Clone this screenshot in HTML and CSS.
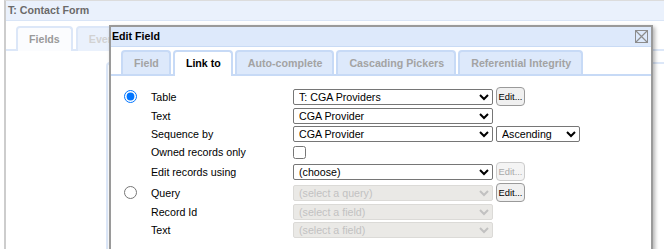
FILE: index.html
```html
<!DOCTYPE html>
<html lang="en">
<head>
    <meta charset="UTF-8">
    <title>Edit Field</title>
    <link rel="stylesheet" href="styles.css">
</head>
<body>
    <!-- window behind the dialog -->
    <div class="window">
        <div class="window-title">T: Contact Form</div>
        <div class="window-tabs">
            <span class="wtab wtab-active">Fields</span>
            <span class="wtab">Events</span>
        </div>
        <div class="window-body">
            <div class="inner-panel"></div>
        </div>
    </div>

    <div class="dialog">
        <div class="dialog-title">
            <span>Edit Field</span>
            <svg class="close" width="13" height="13" viewBox="0 0 13 13">
                <rect x="0.5" y="0.5" width="12" height="12" fill="none" stroke="#8c8c8c"/>
                <path d="M1 1 L12 12 M12 1 L1 12" stroke="#8c8c8c" stroke-width="1.2"/>
            </svg>
        </div>
        <div class="dialog-tabs">
            <span class="tab">Field</span>
            <span class="tab tab-active">Link to</span>
            <span class="tab">Auto-complete</span>
            <span class="tab">Cascading Pickers</span>
            <span class="tab">Referential Integrity</span>
        </div>
        <div class="dialog-body">
            <table class="link-form">
                <tr class="row-btn">
                    <td class="c-radio"><input type="radio" name="source" checked></td>
                    <td class="c-label">Table</td>
                    <td class="c-input"><select><option>T: CGA Providers</option></select></td>
                    <td class="c-extra"><button>Edit...</button></td>
                </tr>
                <tr>
                    <td></td>
                    <td class="c-label">Text</td>
                    <td class="c-input"><select><option>CGA Provider</option></select></td>
                    <td></td>
                </tr>
                <tr>
                    <td></td>
                    <td class="c-label">Sequence by</td>
                    <td class="c-input"><select><option>CGA Provider</option></select></td>
                    <td class="c-extra"><select class="order"><option>Ascending</option></select></td>
                </tr>
                <tr>
                    <td></td>
                    <td class="c-label">Owned records only</td>
                    <td class="c-input"><input type="checkbox"></td>
                    <td></td>
                </tr>
                <tr class="row-btn">
                    <td></td>
                    <td class="c-label">Edit records using</td>
                    <td class="c-input"><select><option>(choose)</option></select></td>
                    <td class="c-extra"><button disabled>Edit...</button></td>
                </tr>
                <tr class="row-btn">
                    <td class="c-radio"><input type="radio" name="source"></td>
                    <td class="c-label">Query</td>
                    <td class="c-input"><select disabled><option>(select a query)</option></select></td>
                    <td class="c-extra"><button>Edit...</button></td>
                </tr>
                <tr>
                    <td></td>
                    <td class="c-label">Record Id</td>
                    <td class="c-input"><select disabled><option>(select a field)</option></select></td>
                    <td></td>
                </tr>
                <tr>
                    <td></td>
                    <td class="c-label">Text</td>
                    <td class="c-input"><select disabled><option>(select a field)</option></select></td>
                    <td></td>
                </tr>
            </table>
        </div>
    </div>
</body>
</html>
```

FILE: styles.css
```css
/* Edit Field dialog over the form window */
* {
    box-sizing: border-box;
}

html, body {
    margin: 0;
    height: 100%;
    overflow: hidden;
    background: #fff;
    font-family: "Liberation Sans", Arial, sans-serif;
    font-size: 8pt;
}

/* background window */
.window {
    margin-left: 4px;
    width: 720px;
    height: 260px;
    border-left: 2px solid #cdcdcd;
    border-top: 1px solid #dcdcdc;
}

.window-title {
    height: 20px;
    padding-left: 2px;
    line-height: 19px;
    font-weight: bold;
    color: #6a6a6a;
    background: #eaf1fc;
    border-bottom: 1px solid #d9e5f7;
}

.window-tabs {
    display: flex;
    align-items: flex-end;
    gap: 3px;
    padding: 5px 0 0 10px;
    border-bottom: 2px solid #dce7f8;
}

.wtab {
    height: 25px;
    margin-bottom: -2px;
    padding: 0 11px;
    line-height: 23px;
    font-weight: bold;
    color: #d2d2d2;
    background: #eaf1fc;
    border: 2px solid #dce7f8;
    border-bottom: none;
    border-radius: 4px 4px 0 0;
}

.wtab-active {
    color: #9a9a9a;
    background: #fbfcfe;
}

.window-body {
    padding: 11px 0 0 100px;
}

.inner-panel {
    height: 200px;
    border-left: 2px solid #dce7f8;
    border-top: 2px solid #dce7f8;
    border-radius: 4px 0 0 0;
}

/* dialog */
.dialog {
    position: absolute;
    left: 109px;
    top: 25px;
    width: 544px;
    height: 240px;
    background: #fff;
    border: 2px solid #9a9a9a;
    box-shadow: 2px 2px 4px rgba(0, 0, 0, 0.3);
}

.dialog-title {
    display: flex;
    align-items: center;
    justify-content: space-between;
    height: 20px;
    padding: 0 3px 1px 1px;
    font-weight: bold;
    color: #000;
    background: #dde9fb;
    border-bottom: 1px solid #c9dbf5;
}

.dialog-tabs {
    display: flex;
    align-items: flex-end;
    gap: 2px;
    padding: 3px 0 0 10px;
    border-bottom: 2px solid #c7daf6;
}

.tab {
    height: 24px;
    padding: 0 10px 0 11px;
    line-height: 22px;
    font-weight: bold;
    color: #a3a3a3;
    background: #dde9fb;
    border: 2px solid #c7daf6;
    border-bottom: none;
    border-radius: 4px 4px 0 0;
}

.tab-active {
    height: 26px;
    margin-bottom: -2px;
    color: #000;
    background: #fff;
}

.dialog-body {
    padding: 10px 0 0 13px;
}

.link-form {
    border-collapse: collapse;
}

.link-form td {
    height: 18px;
    padding: 1px 0;
    vertical-align: middle;
    white-space: nowrap;
}

.link-form .row-btn td {
    height: 21px;
}

.c-radio {
    width: 27px;
}

.c-label {
    width: 142px;
    color: #000;
}

.c-input {
    width: 200px;
}

.c-extra {
    padding-left: 3px !important;
}

input[type="radio"],
input[type="checkbox"] {
    display: block;
    margin: 0;
    width: 13px;
    height: 13px;
}

select {
    display: block;
    width: 200px;
    height: 16px;
    padding: 0 0 0 1px;
    font-family: "Liberation Sans", Arial, sans-serif;
    font-size: 8pt;
    color: #000;
    background-color: #fff;
    border: 1px solid #767676;
    border-radius: 2px;
}

select.order {
    width: 84px;
}

select:disabled {
    color: #a8a8a8;
    background-color: #e2e0dc;
    border-color: #cdcbc7;
}

button {
    display: block;
    width: 29px;
    height: 19px;
    padding: 0;
    font-family: "Liberation Sans", Arial, sans-serif;
    font-size: 7pt;
    color: #000;
    background: #f0f0f0;
    border: 1px solid #9a9a9a;
    border-radius: 4px;
}

button:disabled {
    color: #a8a8a8;
    background: #f4f4f4;
    border-color: #cbcbcb;
}
```
